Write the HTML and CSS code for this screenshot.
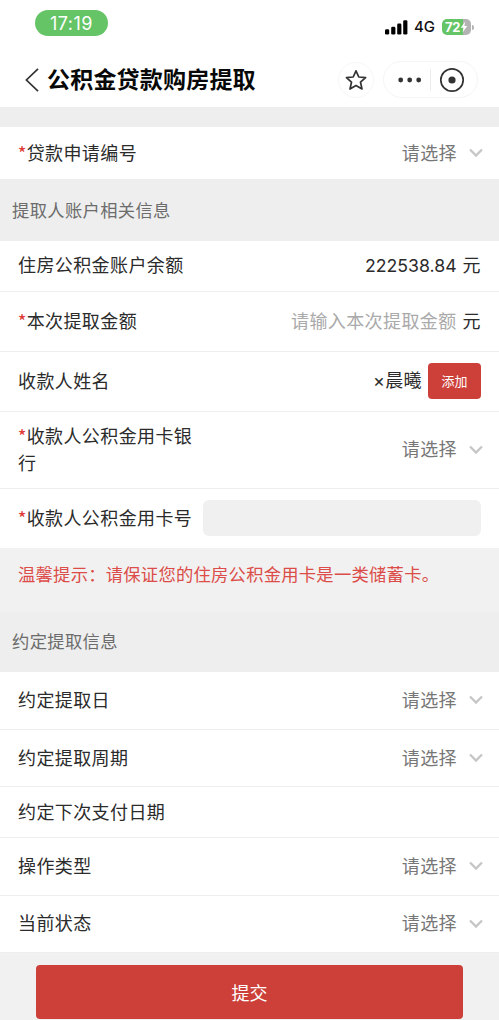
FILE: index.html
```html
<!DOCTYPE html>
<html lang="zh-CN">
<head>
<meta charset="utf-8">
<title>公积金贷款购房提取</title>
<link rel="stylesheet" href="styles.css">
</head>
<body>
<svg class="defs" width="0" height="0">
  <symbol id="chev" viewBox="0 0 14 10"><path d="M1 1.5 L7 7.6 L13 1.5" fill="none" stroke="#c6c6c6" stroke-width="2.3"/></symbol>
</svg>
<header class="top">
  <div class="status">
    <span class="time">17:19</span>
    <div class="signals">
      <svg width="23" height="15" viewBox="0 0 23 15"><rect x="0" y="9.3" width="4.2" height="5.2" rx="1.3"/><rect x="6.2" y="6.8" width="4.2" height="7.7" rx="1.3"/><rect x="12.2" y="3.6" width="4.2" height="10.9" rx="1.3"/><rect x="18.2" y="0.3" width="4.2" height="14.2" rx="1.3"/></svg>
      <span class="net">4G</span>
      <div class="battery"><span>72</span><svg width="8" height="12" viewBox="0 0 8 12"><path d="M5.2 .6 L.8 6.7 H3.6 L2.5 11.4 L7.3 5 H4.4 Z" fill="#fff"/></svg></div>
      <i class="cap"></i>
    </div>
  </div>
  <div class="nav">
    <svg class="back" width="14" height="24" viewBox="0 0 14 24"><path d="M13 .8 L1.4 12 L13 23.2" fill="none" stroke="#333" stroke-width="1.7"/></svg>
    <h1>公积金贷款购房提取</h1>
    <div class="fav"><svg width="24" height="24" viewBox="0 0 24 24"><path d="M12 2.8 L14.8 9 L21.6 9.7 L16.5 14.2 L18 21 L12 17.5 L6 21 L7.5 14.2 L2.4 9.7 L9.2 9 Z" fill="none" stroke="#333" stroke-width="1.7" stroke-linejoin="round"/></svg></div>
    <div class="capsule">
      <svg width="24" height="6" viewBox="0 0 24 6" fill="#333"><circle cx="2.7" cy="3" r="2.4"/><circle cx="11.7" cy="3" r="2.4"/><circle cx="20.7" cy="3" r="2.4"/></svg>
      <i class="bar"></i>
      <svg width="26" height="26" viewBox="0 0 26 26"><circle cx="13" cy="13" r="11.2" fill="none" stroke="#333" stroke-width="1.7"/><circle cx="13" cy="13" r="3.6" fill="#333"/></svg>
    </div>
  </div>
</header>
<main>
  <div class="row h52"><label><b>*</b>贷款申请编号</label><span class="pick">请选择</span><svg class="chev"><use href="#chev"/></svg></div>
  <h2 class="section">提取人账户相关信息</h2>
  <div class="row h50"><label>住房公积金账户余额</label><span class="num">222538.84</span><span class="unit">元</span></div>
  <div class="row h60"><label><b>*</b>本次提取金额</label><span class="hint">请输入本次提取金额</span><span class="unit">元</span></div>
  <div class="row h61"><label>收款人姓名</label><span class="name">×晨曦</span><button class="add">添加</button></div>
  <div class="row h77"><label><b>*</b>收款人公积金用卡银<br>行</label><span class="pick">请选择</span><svg class="chev"><use href="#chev"/></svg></div>
  <div class="row h59"><label><b>*</b>收款人公积金用卡号</label><div class="field"></div></div>
  <p class="notice">温馨提示：请保证您的住房公积金用卡是一类储蓄卡。</p>
  <h2 class="section second">约定提取信息</h2>
  <div class="row h58"><label>约定提取日</label><span class="pick">请选择</span><svg class="chev"><use href="#chev"/></svg></div>
  <div class="row h58"><label>约定提取周期</label><span class="pick">请选择</span><svg class="chev"><use href="#chev"/></svg></div>
  <div class="row h50"><label>约定下次支付日期</label></div>
  <div class="row h58"><label>操作类型</label><span class="pick">请选择</span><svg class="chev"><use href="#chev"/></svg></div>
  <div class="row h58"><label>当前状态</label><span class="pick">请选择</span><svg class="chev"><use href="#chev"/></svg></div>
</main>
<footer><button class="submit">提交</button></footer>
</body>
</html>
```

FILE: styles.css
```css
* { box-sizing: border-box; }
body {
  margin: 0;
  height: 1020px;
  overflow: hidden;
  background: #f1f1f1;
  color: #2b2b2b;
  font-family: "Noto Sans CJK SC", sans-serif;
  font-size: 18px;
  letter-spacing: 0.4px;
}
svg { display: block; flex: none; }
.defs { position: absolute; }
h1, h2, p { margin: 0; }
button { border: 0; padding: 0; font: inherit; color: #fff; background: #cd4039; }

.top { height: 107px; background: #fff; }
.status {
  display: flex;
  justify-content: space-between;
  align-items: flex-start;
  height: 53px;
  padding: 10px 25px 0 35px;
}
.time {
  width: 73px;
  height: 26px;
  border-radius: 13px;
  background: #65c466;
  color: #fff;
  font: 18px/27px Inter, sans-serif;
  letter-spacing: 0.5px;
  text-align: center;
}
.signals { display: flex; align-items: center; height: 18px; margin-top: 8px; }
.net { margin-left: 6px; width: 22px; font: 500 15px/20px Inter, sans-serif; letter-spacing: 0; color: #111; }
.battery {
  display: flex;
  align-items: center;
  width: 29px;
  height: 16px;
  margin-left: 6px;
  padding-left: 3px;
  border-radius: 5px;
  background: linear-gradient(90deg, #65c466 72%, #b3b3b3 72%);
  color: #fff;
  font: 700 13px/16px Inter, sans-serif;
  letter-spacing: -0.2px;
}
.cap { width: 2px; height: 5px; margin-left: 1px; border-radius: 0 2px 2px 0; background: #b3b3b3; }

.nav { display: flex; align-items: center; height: 53px; padding: 0 21px 0 25px; }
.nav h1 {
  margin-left: 8px;
  padding-bottom: 3px;
  flex: 1;
  color: #080808;
  font-size: 23px;
  font-weight: 700;
  line-height: 34px;
  letter-spacing: 0.2px;
  white-space: nowrap;
}
.fav {
  display: flex;
  align-items: center;
  justify-content: center;
  width: 36px;
  height: 36px;
  border: 1px solid #f7f7f7;
  border-radius: 50%;
}
.capsule {
  display: flex;
  align-items: center;
  width: 95px;
  height: 37px;
  margin-left: 9px;
  padding-left: 14px;
  border: 1px solid #f5f5f5;
  border-radius: 19px;
}
.bar { width: 1px; height: 22px; margin: 0 8px; background: #ececec; }

main { border-top: 20px solid #eeeeee; }
.row {
  display: flex;
  align-items: center;
  padding: 0 18px;
  background: #fff;
  border-bottom: 1px solid #eeeeee;
}
.h50 { height: 50.6px; }
.h52 { height: 53px; }
.h58 { height: 57.7px; }
.h59 { height: 59px; border-bottom: 0; }
.h60 { height: 60px; }
.h61 { height: 60.4px; }
.h77 { height: 77px; }
label, .pick, .hint, .unit, .name { padding-bottom: 2px; line-height: 27px; white-space: nowrap; }
label { margin-right: auto; }
label b { color: #e03a34; font-weight: 500; font-size: 17px; }
.pick { color: #777; }
.chev { width: 14px; height: 10px; margin: 0 -2px 0 12px; }
.num { font: 17.7px/27px Inter, sans-serif; letter-spacing: 0; padding-bottom: 1px; }
.unit { margin-left: 6px; }
.hint { color: #aaa; }
.name { font-family: Inter, "Noto Sans CJK SC", sans-serif; }
.add {
  width: 53px;
  height: 36px;
  margin-left: 6px;
  padding-bottom: 1px;
  border-radius: 4px;
  font-size: 13px;
}
.field { width: 278px; height: 36px; border-radius: 6px; background: #f0f0f0; }
.section {
  height: 61px;
  padding-left: 12px;
  background: #eeeeee;
  color: #6c6c6c;
  font-size: 17.3px;
  font-weight: 400;
  line-height: 59px;
  letter-spacing: 0.35px;
}
.section.second { height: 60px; line-height: 58px; }
.notice {
  height: 64px;
  padding: 12px 18px 0;
  color: #dc4c48;
  font-size: 17.3px;
  line-height: 27px;
  letter-spacing: 0.27px;
  white-space: nowrap;
}
footer { padding: 12px 36px 0; }
.submit { display: block; width: 427px; height: 54px; border-radius: 4px; }
```
